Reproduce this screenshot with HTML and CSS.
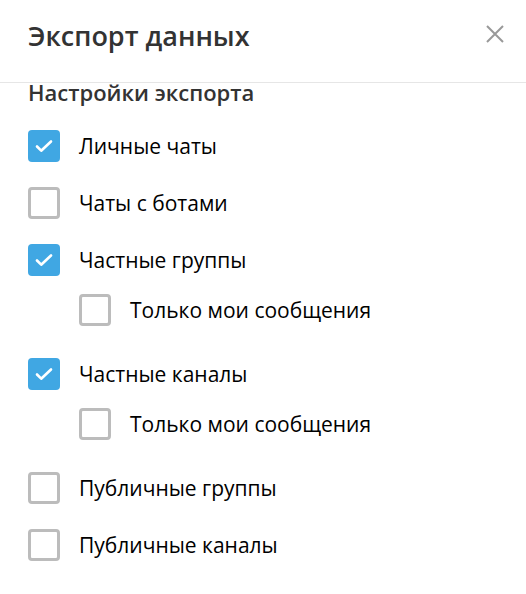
FILE: index.html
```html
<!DOCTYPE html>
<html lang="ru">
<head>
<meta charset="utf-8">
<link rel="stylesheet" href="styles.css">
</head>
<body>
<div class="dialog">
  <header class="header">
    <h1 class="title">Экспорт данных</h1>
    <button class="close" aria-label="Закрыть">
      <svg width="18" height="18" viewBox="0 0 18 18"><path d="M1 1L17 17M17 1L1 17" stroke="#999" stroke-width="2" fill="none"/></svg>
    </button>
  </header>
  <section class="section">
    <h2 class="section-title">Настройки экспорта</h2>
    <ul class="list">
      <li class="row"><span class="box checked"><svg width="32" height="32" viewBox="0 0 32 32"><path d="M9 16.5L13.2 20.7L23 11.5" stroke="#fff" stroke-width="2.6" fill="none" stroke-linecap="round" stroke-linejoin="round"/></svg></span><span class="label">Личные чаты</span></li>
      <li class="row"><span class="box"></span><span class="label">Чаты с ботами</span></li>
      <li class="row row-parent"><span class="box checked"><svg width="32" height="32" viewBox="0 0 32 32"><path d="M9 16.5L13.2 20.7L23 11.5" stroke="#fff" stroke-width="2.6" fill="none" stroke-linecap="round" stroke-linejoin="round"/></svg></span><span class="label">Частные группы</span></li>
      <li class="row row-sub"><span class="box"></span><span class="label">Только мои сообщения</span></li>
      <li class="row row-parent"><span class="box checked"><svg width="32" height="32" viewBox="0 0 32 32"><path d="M9 16.5L13.2 20.7L23 11.5" stroke="#fff" stroke-width="2.6" fill="none" stroke-linecap="round" stroke-linejoin="round"/></svg></span><span class="label">Частные каналы</span></li>
      <li class="row row-sub"><span class="box"></span><span class="label">Только мои сообщения</span></li>
      <li class="row"><span class="box"></span><span class="label">Публичные группы</span></li>
      <li class="row"><span class="box"></span><span class="label">Публичные каналы</span></li>
    </ul>
  </section>
</div>
</body>
</html>
```
FILE: styles.css
```css
* { box-sizing: border-box; }
html, body {
  margin: 0;
  padding: 0;
  background: #fff;
}
body {
  font-family: "Open Sans", "Liberation Sans", sans-serif;
  color: #000;
}
.dialog {
  width: 526px;
  height: 594px;
  overflow: hidden;
}
.header {
  height: 83px;
  padding: 17px 20px 0 28px;
  border-bottom: 1px solid #e6e6e6;
  display: flex;
  justify-content: space-between;
  align-items: flex-start;
}
.title {
  margin: 0;
  font-size: 27px;
  font-weight: 600;
  color: #333;
  line-height: normal;
}
.close {
  border: 0;
  background: none;
  padding: 0;
  margin-top: 8px;
  margin-right: 2px;
  width: 18px;
  height: 18px;
  cursor: pointer;
}
.close svg { display: block; }
.section {
  padding: 0 28px;
}
.section-title {
  margin: 0;
  font-size: 22px;
  font-weight: 600;
  color: #333;
  line-height: 18px;
}
.list {
  list-style: none;
  margin: 17px 0 0;
  padding: 0;
}
.row {
  height: 57px;
  padding-top: 12px;
  display: flex;
  align-items: flex-start;
}
.row-parent { height: 50px; }
.row-sub { height: 64px; padding-left: 51px; }
.box {
  width: 32px;
  height: 32px;
  flex: none;
  border: 3px solid #bcbcbc;
  border-radius: 4px;
  margin-right: 19px;
}
.box.checked {
  border: 0;
  background: #40a7e3;
}
.box svg { display: block; }
.label {
  font-size: 21px;
  line-height: 32px;
}
```
